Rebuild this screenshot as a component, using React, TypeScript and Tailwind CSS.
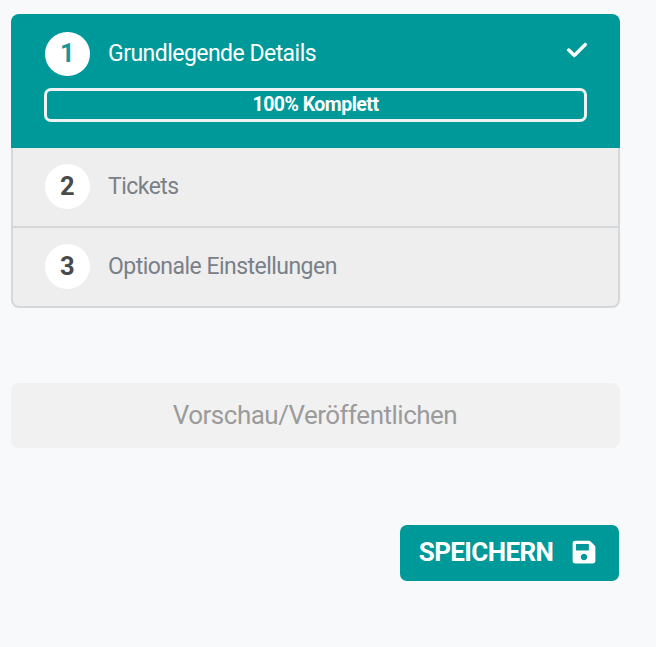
// Event editor sidebar with the setup steps, the publish button and the save button

import { FaSave } from "react-icons/fa"
import { FaCheck } from "react-icons/fa6"

// Steps of the event setup
const steps = [
    { number: 2, title: "Tickets" },
    { number: 3, title: "Optionale Einstellungen" },
]

// Round badge with the number of the step
const StepNumber = ({
    number,
    isActive,
}: {
    number: number
    isActive?: boolean
}) => {
    return (
        <span
            className={`w-[44.5px] h-[44.5px] shrink-0 rounded-full bg-white flex items-center justify-center text-[25.5px] leading-none font-bold ${
                isActive ? "text-[#1a9499]" : "text-[#4a4a4a]"
            }`}
        >
            {number}
        </span>
    )
}

// App component
const App = () => {
    return (
        <div className="w-[656px] h-[647px] overflow-hidden bg-[#f8f9fb] pt-3.5 pl-[11px] font-['Roboto',sans-serif]">
            {/* Steps */}
            <div className="w-[609px] h-[294px]">
                {/* Active step */}
                <div className="h-[134.4px] rounded-t-lg bg-[#009999] px-[33px] pt-[17.5px] text-white">
                    <div className="flex items-center pl-px">
                        <StepNumber number={1} isActive />
                        <h2 className="ml-[18.5px] flex-1 text-[23px] leading-none tracking-[-0.53px]">
                            Grundlegende Details
                        </h2>
                        <FaCheck
                            className="text-[22px] -mt-2 -mr-px"
                            strokeWidth={22}
                        />
                    </div>

                    {/* Progress */}
                    <div className="mt-3 h-[34px] rounded-[7px] border-[3px] border-[#eff2f3] flex items-center justify-center text-[19.5px] leading-none tracking-[-0.52px] font-bold">
                        100% Komplett
                    </div>
                </div>

                {/* Remaining steps */}
                <div className="h-[159.6px] rounded-b-lg overflow-hidden border-2 border-t-0 border-[#d6d7d8] bg-[#eeeeee]">
                    {steps.map((step) => (
                        <div
                            key={step.number}
                            className="h-20 flex items-start pt-[16.2px] pl-8 border-b-2 border-[#d6d7d8] first:h-[79.6px] first:pt-[15.8px]"
                        >
                            <StepNumber number={step.number} />
                            <h2 className="ml-[18.5px] mt-[10.5px] text-[23px] leading-none tracking-[-0.53px] text-[#7a8087]">
                                {step.title}
                            </h2>
                        </div>
                    ))}
                </div>
            </div>

            {/* Publish button */}
            <button
                className="mt-[75px] w-[609px] h-[65px] rounded-lg bg-[#f1f1f1] pr-px pb-[2px] text-[26px] leading-none tracking-[-0.5px] text-[#9b9b9b] flex items-center justify-center"
                disabled
            >
                Vorschau/Veröffentlichen
            </button>

            {/* Save button */}
            <div className="mt-[77px] w-[608px] flex justify-end">
                <button className="w-[219.5px] h-[56.4px] rounded-[7px] bg-[#009999] pr-[3px] pb-[3px] text-white text-[26px] leading-none tracking-[-0.62px] font-bold flex items-center justify-center gap-[17.5px]">
                    SPEICHERN
                    <FaSave className="text-[26px]" />
                </button>
            </div>
        </div>
    )
}

// Export
export default App
